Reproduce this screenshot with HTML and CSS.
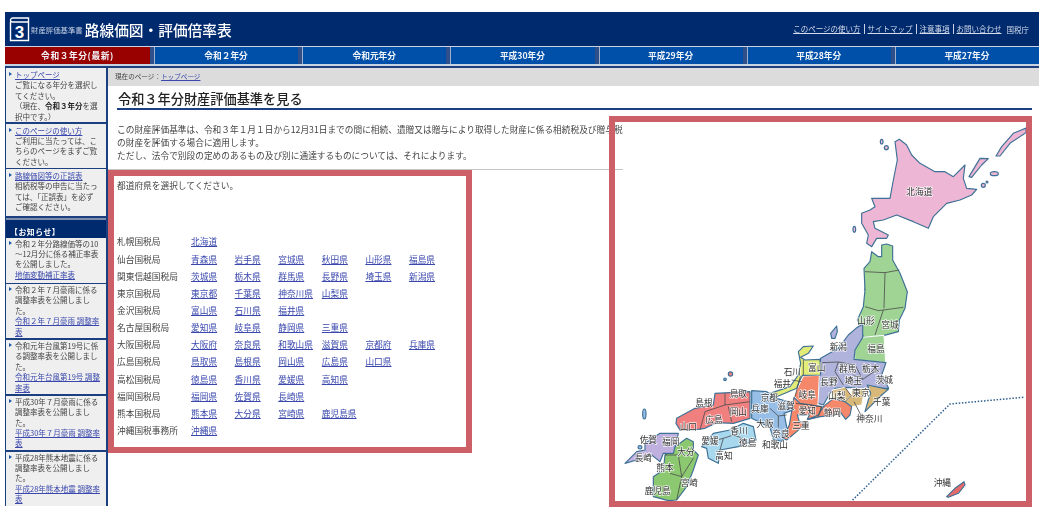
FILE: index.html
```html
<!DOCTYPE html>
<html lang="ja">
<head>
<meta charset="utf-8">
<title>路線価図・評価倍率表</title>
<link rel="stylesheet" href="styles.css">
</head>
<body>
<div class="page">
  <header class="top">
    <svg class="book" viewBox="0 0 21 25" width="21" height="25"><path class="book-line" d="M1.5 5V23.5H19.500V1H4Q1.500 1 1.500 3.500Q1.500 5 4 5H19.500"/><text class="book-num" x="10.500" y="21">3</text></svg>
    <span class="sub">財産評価基準書</span>
    <span class="title">路線価図・評価倍率表</span>
    <nav class="util"><a>このページの使い方</a><a>サイトマップ</a><a>注意事項</a><a>お問い合わせ</a><span class="nta">国税庁</span></nav>
  </header>
  <nav class="tabs">
    <a class="tab now">令和３年分(最新)</a><a class="tab">令和２年分</a><a class="tab">令和元年分</a><a class="tab">平成30年分</a><a class="tab">平成29年分</a><a class="tab">平成28年分</a><a class="tab">平成27年分</a>
  </nav>
  <div class="body">
    <aside class="side">
      <div class="box b1"><a>トップページ</a><p>ご覧になる年分を選択してください。<br>（現在、<b>令和３年分</b>を選択中です。）</p></div>
      <div class="box b2"><a>このページの使い方</a><p>ご利用に当たっては、こちらのページをまずご覧ください。</p></div>
      <div class="box b3"><a>路線価図等の正誤表</a><p>相続税等の申告に当たっては、「正誤表」を必ず<br>ご確認ください。</p></div>
      <h2 class="news">【お知らせ】</h2>
      <div class="box b4"><p>令和２年分路線価等の10～12月分に係る補正率表を公開しました。</p><a class="plain">地価変動補正率表</a></div>
      <div class="box b5"><p>令和２年７月豪雨に係る調整率表を公開しました。</p><a class="plain">令和２年７月豪雨 調整率表</a></div>
      <div class="box b5"><p>令和元年台風第19号に係る調整率表を公開しました。</p><a class="plain">令和元年台風第19号 調整率表</a></div>
      <div class="box b5"><p>平成30年７月豪雨に係る調整率表を公開しました。</p><a class="plain">平成30年７月豪雨 調整率表</a></div>
      <div class="box b5"><p>平成28年熊本地震に係る調整率表を公開しました。</p><a class="plain">平成28年熊本地震 調整率表</a></div>
    </aside>
    <main class="main">
      <div class="crumb">現在のページ：<a>トップページ</a></div>
      <h1 class="head">令和３年分財産評価基準を見る</h1>
      <p class="intro">この財産評価基準は、令和３年１月１日から12月31日までの間に相続、遺贈又は贈与により取得した財産に係る相続税及び贈与税<br>の財産を評価する場合に適用します。<br>ただし、法令で別段の定めのあるもの及び別に通達するものについては、それによります。</p>
      <div class="rule"></div>
      <p class="choose">都道府県を選択してください。</p>
      <div class="list">
        <div class="row"><span>札幌国税局</span><a>北海道</a></div>
        <div class="row"><span>仙台国税局</span><a>青森県</a><a>岩手県</a><a>宮城県</a><a>秋田県</a><a>山形県</a><a>福島県</a></div>
        <div class="row"><span>関東信越国税局</span><a>茨城県</a><a>栃木県</a><a>群馬県</a><a>長野県</a><a>埼玉県</a><a>新潟県</a></div>
        <div class="row"><span>東京国税局</span><a>東京都</a><a>千葉県</a><a>神奈川県</a><a>山梨県</a></div>
        <div class="row"><span>金沢国税局</span><a>富山県</a><a>石川県</a><a>福井県</a></div>
        <div class="row"><span>名古屋国税局</span><a>愛知県</a><a>岐阜県</a><a>静岡県</a><a>三重県</a></div>
        <div class="row"><span>大阪国税局</span><a>大阪府</a><a>奈良県</a><a>和歌山県</a><a>滋賀県</a><a>京都府</a><a>兵庫県</a></div>
        <div class="row"><span>広島国税局</span><a>鳥取県</a><a>島根県</a><a>岡山県</a><a>広島県</a><a>山口県</a></div>
        <div class="row"><span>高松国税局</span><a>徳島県</a><a>香川県</a><a>愛媛県</a><a>高知県</a></div>
        <div class="row"><span>福岡国税局</span><a>福岡県</a><a>佐賀県</a><a>長崎県</a></div>
        <div class="row"><span>熊本国税局</span><a>熊本県</a><a>大分県</a><a>宮崎県</a><a>鹿児島県</a></div>
        <div class="row"><span>沖縄国税事務所</span><a>沖縄県</a></div>
      </div>
    </main>
  </div>
  <div class="frame frame-list"></div>
  <div class="frame frame-map">
    <svg class="map" viewBox="615 122 411 379" width="411" height="379">
      <g transform="translate(780 120) scale(.33333)">
        <g class="sea" fill="#ecb6d4">
          <path d="M345 65L358 58L380 75L395 105L420 130L465 155L495 155L520 170L555 135L550 175L560 205L590 208L575 225L540 240L500 250L460 290L445 325L400 305L350 285L310 300L280 305L285 325L325 345L320 355L290 355L275 380L260 370L265 345L245 310L245 280L270 270L285 260L275 235L330 235L340 180L352 120Z"/>
          <path d="M648 108L665 80L700 40L738 24V38L690 70L660 108Z"/>
          <path d="M567 170L600 115L625 116L605 135L575 172Z"/>
          <ellipse cx="643" cy="161" rx="12" ry="6"/><circle cx="610" cy="196" r="6"/><circle cx="621" cy="186" r="3"/>
          <circle cx="319" cy="83" r="6"/><ellipse cx="305" cy="65" rx="4" ry="7"/><ellipse cx="223" cy="328" rx="4" ry="9"/>
        </g>
        <g class="labels">
          <text x="418" y="213">北海道</text><text x="308" y="428">青森</text><text x="277" y="500">秋田</text><text x="345" y="510">岩手</text>
        </g>
      </g>
      <g transform="translate(780 300) scale(.33333)">
        <path class="dots" d="M730 292L510 312L215 603"/>
        <path class="sea" fill="#9fd494" d="M275 -145L295 -130L305 -130L305 -165L320 -168L338 -162L338 -120L360 -80L382 -25L375 25L358 60L355 95L290 112L250 112L240 75L232 60L250 20L255 -30L252 -95L270 -115Z"/>
        <path class="land" fill="#9fd494" d="M247 112L312 106L317 188L224 180L224 150Z"/>
        <path class="sea" fill="#b0b4dc" d="M122 175L175 145L205 105L228 85L248 72L248 112L225 150L222 178L318 188L305 225L326 265L250 265L195 262L165 265L150 280L130 315L115 310L115 262Z"/>
        <path class="sea" fill="#b0b4dc" d="M152 100L170 78L172 95L165 115L155 115Z"/>
        <path class="land" fill="#d8b878" d="M157 270L195 262L215 285L195 305L160 295Z"/>
        <path class="land" fill="#d8b878" d="M215 265L270 265L250 290L245 315L215 320L195 305L215 285Z"/>
        <path class="sea" fill="#d8b878" d="M262 255L325 268L305 285L270 320L255 335L265 300L272 280Z"/>
        <path class="land" fill="#f5876a" d="M70 228L118 226L114 315L95 318L60 310L42 288Z"/>
        <path class="sea" fill="#f5876a" d="M42 292L60 310L125 320L115 350L82 358L88 345L52 345L58 365L80 368L50 395L20 420L8 415L28 375Z"/>
        <path class="sea" fill="#f5876a" d="M130 320L160 295L195 305L215 320L210 345L197 358L180 335L160 347L120 350L85 358L115 345Z"/>
        <path class="sea" fill="#e4ec78" d="M55 155L70 140L100 138L85 160L62 172L75 180L120 178L122 225L68 226L60 240L50 265L-10 290L-30 280L30 260L55 225L62 190Z"/>
        <path class="lines" d="M175 186L165 215L190 255M225 195L248 238L290 210M248 238L220 225M175 186L225 195M122 188L175 186M70 180V225M285 105L310 30M255 20L295 32L370 22M312 25L315 -82M255 -85L315 -82L358 -90M212 285L195 262M195 305L215 285M222 305L245 350M48 310L125 320L115 350M62 226L45 290"/>
        <g class="labels">
          <text x="258" y="60">山形</text><text x="330" y="72">宮城</text><text x="288" y="143">福島</text><text x="175" y="138">新潟</text><text x="37" y="212">石川</text><text x="110" y="202">富山</text><text x="203" y="205">群馬</text><text x="272" y="204">栃木</text><text x="147" y="244">長野</text><text x="220" y="240">埼玉</text><text x="313" y="238">茨城</text><text x="243" y="276">東京</text><text x="170" y="285">山梨</text><text x="82" y="282">岐阜</text><text x="305" y="303">千葉</text><text x="268" y="354">神奈川</text><text x="157" y="336">静岡</text><text x="82" y="331">愛知</text><text x="63" y="376">三重</text><text x="487" y="546">沖縄</text>
        </g>
        <path class="sea" fill="#e86a6a" d="M500 590L525 565L552 545L555 555L535 580L505 592Z"/>
      </g>
      <g transform="translate(610 340) scale(.33333)">
        <path class="sea" fill="#96bee6" d="M425 152L470 155L500 175L550 190L550 210L522 220L530 260L535 272L515 305L490 298L480 262L425 235Z"/>
        <path class="sea" fill="#f08080" d="M200 235L255 205L310 195L315 160L420 155L420 235L370 250L320 248L285 265L250 270L210 270L198 250Z"/>
        <path class="sea" fill="#a8d8ee" d="M275 320L310 280L360 270L400 250L430 260L438 300L410 310L385 320L330 330L325 370L295 355L290 325Z"/>
        <path class="sea" fill="#8cc870" d="M195 320L230 295L250 305L250 330L265 345L250 390L230 440L200 480L175 482L130 470L130 410L160 390L165 345Z"/>
        <path class="sea" fill="#c0b0e0" d="M105 310L150 280L205 280L190 340L160 340L150 365L125 345L80 360L45 370L80 335L105 330Z"/>
        <path class="sea" fill="#f08080" d="M355 102A6 6 0 1 0 368 102A6 6 0 1 0 355 102Z"/>
        <circle class="sea" fill="#96bee6" cx="345" cy="118" r="4"/>
        <ellipse class="sea" fill="#96bee6" cx="103" cy="222" rx="5" ry="15"/>
        <ellipse class="sea" fill="#96bee6" cx="90" cy="322" rx="6" ry="5"/>
        <path class="lines" d="M345 160V195M270 270L285 215L345 195L420 185M355 200L365 245M480 205L505 228L530 225M505 228V262M320 300L340 295L370 285L400 295M330 330L340 295M205 345L215 410L200 480M180 400L215 410L250 355M165 345L205 345M545 120L575 125"/>
        <g class="labels">
          <text x="517" y="128">福井</text><text x="385" y="158">鳥取</text><text x="282" y="185">島根</text><text x="385" y="212">岡山</text><text x="312" y="236">広島</text><text x="235" y="258">山口</text><text x="478" y="170">京都</text><text x="528" y="195">滋賀</text><text x="450" y="205">兵庫</text><text x="465" y="248">大阪</text><text x="513" y="280">奈良</text><text x="495" y="312">和歌山</text><text x="387" y="269">香川</text><text x="300" y="300">愛媛</text><text x="413" y="305">徳島</text><text x="342" y="345">高知</text><text x="115" y="297">佐賀</text><text x="182" y="302">福岡</text><text x="228" y="333">大分</text><text x="100" y="350">長崎</text><text x="165" y="381">熊本</text><text x="238" y="427">宮崎</text><text x="143" y="450">鹿児島</text>
        </g>
      </g>
    </svg>
  </div>
</div>
</body>
</html>
```
FILE: styles.css
```css
* { box-sizing: border-box; }
html, body { margin: 0; padding: 0; background: #fff; }
body { font-family: "Noto Sans CJK JP", "Noto Sans", sans-serif; color: #444; }
p, h1, h2 { margin: 0; font-weight: normal; }
a { color: #3a48ad; text-decoration: underline; }
.page { position: relative; width: 1034px; height: 511px; margin: 12px 0 0 5px; filter: blur(.35px); }

.top { display: flex; align-items: center; height: 34px; padding-left: 4px; background: #002a6e; color: #fff; }
.book { flex: none; }
.book-line { fill: none; stroke: #fff; stroke-width: 1.4; }
.book-num { fill: #fff; font-size: 17px; font-weight: 700; text-anchor: middle; font-family: "Liberation Sans", sans-serif; }
.sub { margin-left: 1px; font-size: 7.400px; color: #c8d2e6; white-space: nowrap; }
.title { margin-left: 2px; font-size: 14.700px; font-weight: 500; white-space: nowrap; }
.util { display: flex; align-items: center; margin-left: auto; padding-right: 10px; font-size: 7.500px; }
.util a { color: #d5dcec; padding: 0 3px; border-left: 1px solid #c8d2e6; line-height: 10px; }
.util a:first-child { border-left: 0; }
.nta { margin-left: 2px; color: #d5dcec; }

.tabs { display: grid; grid-template-columns: 145px repeat(6, 1fr); height: 22px; padding: 1px 0 2px; background: #c9d2e0; border-bottom: 2px solid #1c3f80; }
.tab { display: flex; align-items: center; justify-content: center; background: #0050aa; color: #f2f5fa; font-size: 8.700px; font-weight: 700; text-decoration: none; border-left: 4px solid #2f4f8a; box-shadow: inset 1px 0 #9fb0cc; }
.tab.now { background: #990000; border-left: 0; box-shadow: none; letter-spacing: .6px; }

.body { display: flex; align-items: flex-start; }
.side { flex: none; width: 103px; background: #1c3f80; border-right: 2px solid #1c3f80; border-left: 1px solid #1c3f80; font-size: 7.500px; line-height: 10.400px; }
.box { position: relative; padding: 2px 3px 2px 9px; background: #efefef; margin-bottom: 1.500px; color: #444; }
.box::before { content: ""; position: absolute; left: 3px; top: 4px; border-left: 3px solid #1c5aa8; border-top: 2px solid transparent; border-bottom: 2px solid transparent; }
.box:last-child { margin-bottom: 0; }
.box b { color: #222; }
.b1 { height: 54px; }
.b2 { height: 44px; }
.b3 { height: 47px; }
.b4 { height: 45px; padding-top: 1px; }
.b5 { height: 54.400px; padding-top: 1px; }
.b4::before, .b5::before { top: 3px; }
.news { padding: 6px 0 0 4px; height: 20px; background: #002a6e; border-top: 2px solid #7f8fae; color: #fff; font-size: 7.800px; line-height: 11px; font-weight: 700; letter-spacing: .6px; }
.plain { display: block; }

.main { flex: 1; min-width: 0; }
.crumb { height: 18px; padding-left: 7px; background: #dcdcdc; font-size: 6.600px; line-height: 16px; }
.head { margin: 0 7px 0 9px; height: 24px; padding: 2px 0 0 1px; border-bottom: 2px solid #1c3f80; color: #222; font-size: 13.200px; line-height: 22px; font-weight: 500; }
.intro { width: 520px; margin: 14px 0 0 9px; font-size: 8.700px; line-height: 12.800px; }
.rule { width: 515px; height: 1px; margin: 7px 0 0 0; background: #c4c4c4; }
.choose { margin: 10px 0 0 9px; font-size: 8.700px; line-height: 12px; }
.list { margin: 41px 0 0 9px; font-size: 8.700px; }
.row { display: grid; grid-template-columns: 74px repeat(6, 43.600px); height: 17.150px; line-height: 17.150px; white-space: nowrap; }

.frame { position: absolute; border: 6px solid #cd5f68; }
.frame-list { left: 103px; top: 158px; width: 364px; height: 283px; }
.frame-map { left: 604px; top: 104px; width: 423px; height: 391px; }
.map { display: block; }
.sea { stroke: #3f7196; stroke-width: 3.500; stroke-linejoin: round; }
.land { stroke: #fff; stroke-width: 3; stroke-linejoin: round; }
.lines { fill: none; stroke: #4a4a4a; stroke-width: 2.400; }
.dots { fill: none; stroke: #2f5f90; stroke-width: 4.500; stroke-dasharray: 4.500 5; }
.labels text { fill: #333; font-size: 26px; text-anchor: middle; dominant-baseline: central; paint-order: stroke; stroke: rgba(255,255,255,.85); stroke-width: 4px; }
```
